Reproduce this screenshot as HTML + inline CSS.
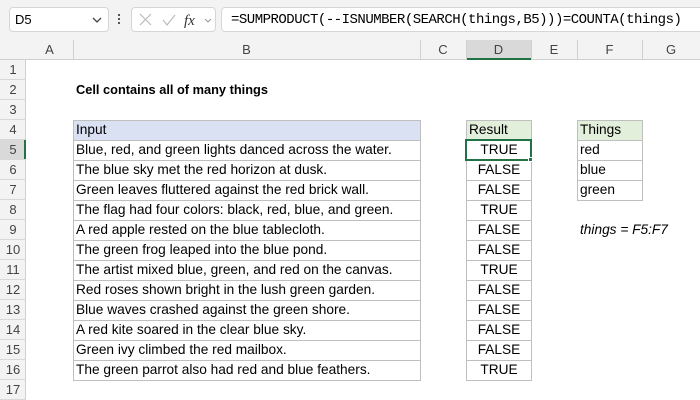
<!DOCTYPE html><html><head><style>
body{margin:0;width:700px;height:400px;background:#fff;font-family:"Liberation Sans",Calibri,sans-serif;font-size:13.7px;overflow:hidden;position:relative}
.a{position:absolute;box-sizing:border-box}
.t{position:absolute;white-space:nowrap;line-height:20px}
</style></head><body>
<div class="a" style="left:0;top:0;width:700px;height:40px;background:#f3f3f3"></div>
<div class="a" style="left:9px;top:7px;width:100px;height:25px;background:#fff;border:1px solid #d6d6d6;border-radius:4px"></div>
<div class="t" style="left:15px;top:10px;font-size:13px">D5</div>
<svg class="a" style="left:92px;top:16px" width="10" height="8"><path d="M1 2l4 4 4-4" fill="none" stroke="#444" stroke-width="1.3"/></svg>
<div class="a" style="left:118px;top:14px;width:2px;height:2px;background:#555;box-shadow:0 4px #555,0 8px #555"></div>
<div class="a" style="left:131px;top:7px;width:85px;height:25px;background:#fff;border:1px solid #d6d6d6;border-radius:4px"></div>
<svg class="a" style="left:137px;top:12px" width="80" height="16"><path d="M3 2l11 11M14 2L3 13" stroke="#bbb" stroke-width="1.2"/><path d="M26 8l4 5 8-10" fill="none" stroke="#bbb" stroke-width="1.2"/><text x="47" y="13" font-family="Liberation Serif" font-style="italic" font-size="15" fill="#333">fx</text><path d="M68 7l3 3 3-3" fill="none" stroke="#999"/></svg>
<div class="a" style="left:221px;top:7px;width:485px;height:25px;background:#fff;border:1px solid #d6d6d6;border-radius:4px"></div>
<div class="t" style="left:231px;top:10px;font-family:'Liberation Mono',monospace;font-size:14px;letter-spacing:-0.5px">=SUMPRODUCT(--ISNUMBER(SEARCH(things,B5)))=COUNTA(things)</div>
<div class="a" style="left:0;top:40px;width:700px;height:20px;background:#f3f3f3;border-bottom:1px solid #d0d0d0"></div>
<div class="a" style="left:0;top:60px;width:26px;height:340px;background:#f3f3f3;border-right:1px solid #d0d0d0"></div>
<div class="a" style="left:466px;top:40px;width:65px;height:20px;background:#d9d9d9;border-bottom:2px solid #217346"></div>
<div class="a" style="left:0;top:140px;width:26px;height:20px;background:#d9d9d9;border-right:2px solid #217346"></div>
<div id="g"></div>
<script>
let h='';const cols=[[26,73,'A'],[73,420,'B'],[420,466,'C'],[466,531,'D'],[531,577,'E'],[577,642,'F'],[642,700,'G']];
for(const[c,d,n] of cols){h+=`<div class="a" style="left:${d}px;top:40px;width:1px;height:20px;background:#d0d0d0"></div><div class="t" style="left:${c}px;width:${d-c}px;top:40px;text-align:center;color:#444;font-size:13px">${n}</div>`}
for(let r=1;r<=17;r++){let y=60+(r-1)*20;h+=`<div class="a" style="left:0;top:${y+19}px;width:26px;height:1px;background:#d8d8d8"></div><div class="t" style="left:0;width:26px;top:${y}px;text-align:center;color:#444;font-size:13px">${r}</div>`}
const B=["Blue, red, and green lights danced across the water.","The blue sky met the red horizon at dusk.","Green leaves fluttered against the red brick wall.","The flag had four colors: black, red, blue, and green.","A red apple rested on the blue tablecloth.","The green frog leaped into the blue pond.","The artist mixed blue, green, and red on the canvas.","Red roses shown bright in the lush green garden.","Blue waves crashed against the green shore.","A red kite soared in the clear blue sky.","Green ivy climbed the red mailbox.","The green parrot also had red and blue feathers."];
const D=[1,0,0,1,0,0,1,0,0,0,0,1];
h+=`<div class="a" style="left:73px;top:120px;width:348px;height:21px;background:#d9e1f2;border:1px solid #bfbfbf"></div><div class="t" style="left:76px;top:120px">Input</div>`;
h+=`<div class="a" style="left:466px;top:120px;width:66px;height:21px;background:#e2efda;border:1px solid #bfbfbf"></div><div class="t" style="left:469px;top:120px">Result</div>`;
h+=`<div class="a" style="left:577px;top:120px;width:66px;height:21px;background:#e2efda;border:1px solid #bfbfbf"></div><div class="t" style="left:580px;top:120px">Things</div>`;
B.forEach((s,i)=>{let y=140+i*20;h+=`<div class="a" style="left:73px;top:${y}px;width:348px;height:21px;border:1px solid #bfbfbf"></div><div class="t" style="left:76px;top:${y}px">${s}</div><div class="a" style="left:466px;top:${y}px;width:66px;height:21px;border:1px solid #bfbfbf"></div><div class="t" style="left:466px;width:66px;text-align:center;top:${y}px">${D[i]?'TRUE':'FALSE'}</div>`});
["red","blue","green"].forEach((s,i)=>{let y=140+i*20;h+=`<div class="a" style="left:577px;top:${y}px;width:66px;height:21px;border:1px solid #bfbfbf"></div><div class="t" style="left:580px;top:${y}px">${s}</div>`});
h+=`<div class="t" style="left:76px;top:80px;font-weight:bold;font-size:12.8px">Cell contains all of many things</div>`;
h+=`<div class="t" style="left:580px;top:220px;font-style:italic">things = F5:F7</div>`;
h+=`<div class="a" style="left:465px;top:139px;width:67px;height:22px;border:2px solid #217346"></div><div class="a" style="left:528px;top:157px;width:5px;height:5px;background:#217346;border:1px solid #fff"></div>`;
document.getElementById('g').innerHTML=h;
</script>
</body></html>
